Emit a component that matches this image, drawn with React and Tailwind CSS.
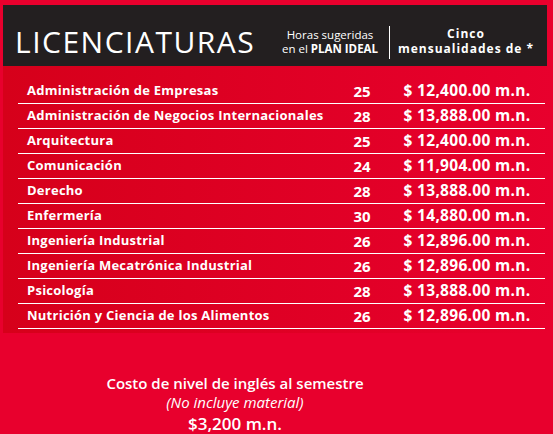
const rows = [
  { name: 'Administración de Empresas', hours: 25, price: '$ 12,400.00 m.n.' },
  { name: 'Administración de Negocios Internacionales', hours: 28, price: '$ 13,888.00 m.n.' },
  { name: 'Arquitectura', hours: 25, price: '$ 12,400.00 m.n.' },
  { name: 'Comunicación', hours: 24, price: '$ 11,904.00 m.n.' },
  { name: 'Derecho', hours: 28, price: '$ 13,888.00 m.n.' },
  { name: 'Enfermería', hours: 30, price: '$ 14,880.00 m.n.' },
  { name: 'Ingeniería Industrial', hours: 26, price: '$ 12,896.00 m.n.' },
  { name: 'Ingeniería Mecatrónica Industrial', hours: 26, price: '$ 12,896.00 m.n.' },
  { name: 'Psicología', hours: 28, price: '$ 13,888.00 m.n.' },
  { name: 'Nutrición y Ciencia de los Alimentos', hours: 26, price: '$ 12,896.00 m.n.' },
];

export default function App() {
  return (
    <div className="w-[553px] h-[434px] overflow-hidden bg-[#e8002d] pt-[5px] pl-[3px] text-white font-['Open_Sans',sans-serif]">
      {/* header */}
      <div className="w-[544px] h-[61px] bg-[#231f20] pt-[13px] flex items-center">
        <h1 className="ml-[12px] w-[262px] text-[30px] font-medium leading-none tracking-[1.5px]">LICENCIATURAS</h1>
        <p className="w-[106px] text-center text-[11.5px] leading-[14px]">
          Horas sugeridas
          <br />
          en el <span className="font-bold">PLAN IDEAL</span>
        </p>
        <div className="ml-[6px] w-[1px] h-[33px] bg-white" />
        <p className="w-[152px] text-center text-[12px] leading-[14.75px] font-bold tracking-[1px]">
          Cinco
          <br />
          mensualidades de *
        </p>
      </div>

      {/* table */}
      <div className="w-[550px] h-[267px] bg-gradient-to-r from-[#d6001a] to-[#e8002d] pt-[13px] pl-[15px]">
        {rows.map((r) => (
          <div key={r.name} className="w-[527px] h-[25px] border-b border-white flex items-center">
            <div className="flex-1 pl-[9px] text-[13px] font-bold tracking-[0.25px]">{r.name}</div>
            <div className="w-[40px] mr-[10px] text-center text-[15px] font-bold">{r.hours}</div>
            <div className="w-[150px] mr-[3px] text-center text-[15.5px] font-bold tracking-[0.3px]">{r.price}</div>
          </div>
        ))}
      </div>

      {/* footer */}
      <div className="w-[464px] pt-[41px] text-center">
        <div className="text-[15px] font-semibold leading-[18px]">Costo de nivel de inglés al semestre</div>
        <div className="text-[15px] italic font-medium leading-[20px]">(No incluye material)</div>
        <div className="text-[17px] font-semibold leading-[24px]">$3,200 m.n.</div>
      </div>
    </div>
  );
}
